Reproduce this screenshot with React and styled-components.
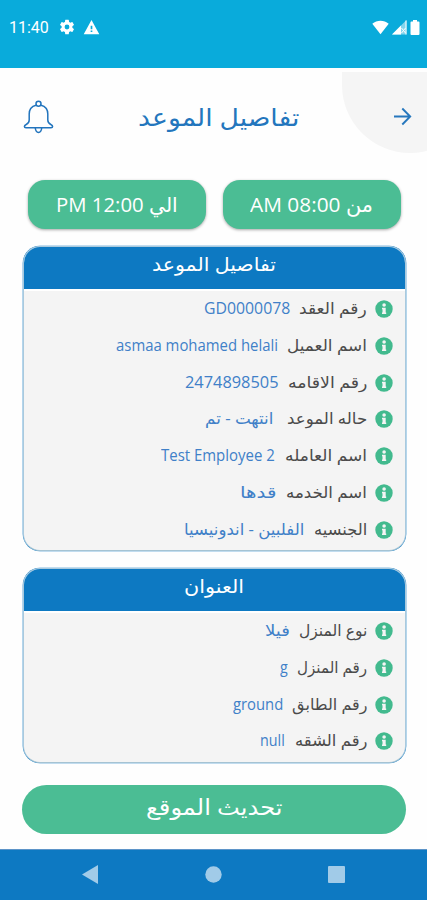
import React, { useLayoutEffect, useRef, useState } from "react";
import styled, { createGlobalStyle } from "styled-components";

const colors = {
  sky: "#09abdb",
  blue: "#0d79c2",
  link: "#4080c8",
  green: "#4bbd94",
  ink: "#4b4b4b",
  panel: "#f4f4f4",
};

const GlobalStyle = createGlobalStyle`
  *, *::before, *::after { box-sizing: border-box; }
  body {
    margin: 0;
    background: #fff;
    font-family: "Open Sans", "DejaVu Sans", sans-serif;
  }
`;

const Screen = styled.div`
  display: flex;
  flex-direction: column;
  width: 427px;
  height: 900px;
  overflow: hidden;
  background: #fefefe;
`;

const StatusBar = styled.div`
  display: flex;
  justify-content: space-between;
  flex: none;
  height: 67.5px;
  padding: 17px 7px 0 9px;
  background: ${colors.sky};
  color: #fff;
`;

const StatusGroup = styled.div`
  display: flex;
  align-items: center;
  height: 20px;
  gap: ${(p) => p.$gap}px;
`;

const Clock = styled.span`
  width: 39px;
  font: 400 16px/20px Roboto, sans-serif;
  margin-right: 3px;
  padding-top: 1px;
  white-space: nowrap;
`;

const Header = styled.header`
  position: relative;
  display: flex;
  align-items: center;
  justify-content: space-between;
  flex: none;
  height: 98.5px;
  padding: 0 15px 0 23px;
`;

const CornerCircle = styled.div`
  position: absolute;
  top: 4px;
  left: 342px;
  width: 136px;
  height: 81.5px;
  border-radius: 0 0 68px 68px;
  background: #f5f5f5;
`;

const IconButton = styled.button`
  position: relative;
  display: flex;
  padding: 0;
  border: 0;
  background: none;
`;

const Title = styled.h1`
  margin: 0 11px 0 0;
  color: #2376bd;
  font-size: 24px;
  font-weight: 400;
  line-height: 40px;
`;

const Times = styled.div`
  display: flex;
  direction: rtl;
  justify-content: space-between;
  flex: none;
  margin: 14px 26.5px 0 27.5px;
`;

const TimePill = styled.div`
  display: flex;
  justify-content: center;
  width: 178px;
  height: 49px;
  padding-top: 5px;
  border-radius: 17px;
  background: ${colors.green};
  box-shadow: 0 1px 3px rgba(0, 0, 0, 0.35);
  color: #fff;
  font-size: 20px;
  line-height: 40px;
`;

const Card = styled.section`
  direction: rtl;
  flex: none;
  height: ${(p) => p.$height}px;
  margin: 17px 21px 0 22.5px;
  border: 1px solid #a9c9dd;
  border-bottom: 1.5px solid #a5c3d3;
  border-radius: 17px;
  background: linear-gradient(#fff, #fff) top / 100% 44px no-repeat, ${colors.panel};
  overflow: hidden;
  box-shadow: 0 0 0 0.3px ${colors.blue};
`;

const CardTitle = styled.h2`
  display: flex;
  justify-content: center;
  height: 43px;
  margin: -1px -1px 1.8px;
  background: ${colors.blue};
  color: #fff;
  font-size: 19px;
  font-weight: 400;
  line-height: 37px;
`;

const Row = styled.div`
  display: flex;
  align-items: center;
  height: 36.75px;
  padding-right: 12.4px;
`;

const Label = styled.span`
  margin-right: 7.5px;
  color: ${colors.ink};
  font-size: 16px;
  line-height: 30px;
`;

const Value = styled.span`
  margin-right: ${(p) => p.$gap}px;
  color: ${colors.link};
  font-size: 16px;
  line-height: 30px;
`;

const UpdateButton = styled.button`
  display: flex;
  justify-content: center;
  flex: none;
  height: 48.5px;
  margin: 22px 21px 0 22px;
  padding: 0 11px 0 0;
  border: 0;
  border-radius: 25px;
  background: ${colors.green};
  color: #fff;
  font-family: inherit;
  font-size: 22px;
  line-height: 42px;
`;

const NavBar = styled.nav`
  display: flex;
  align-items: center;
  justify-content: space-between;
  flex: none;
  height: 51.5px;
  margin-top: auto;
  padding: 0 82px;
  border-top: 1.5px solid #5c94c8;
  background: ${colors.blue};
`;

const FitBox = styled.span`
  display: block;
  direction: ltr;
  width: ${(p) => p.$width}px;
  white-space: nowrap;
  transform: translateY(${(p) => p.$shift}px);
`;

const FitText = styled.span`
  display: inline-block;
  vertical-align: top;
  transform-origin: 0 50%;
`;

/* Condenses or expands a line of text to fill a known width. */
function Fit({ width, shift = 0, dir = "rtl", children }) {
  const ref = useRef(null);
  const [scale, setScale] = useState(1);
  useLayoutEffect(() => {
    setScale(width / ref.current.offsetWidth);
  }, [width, children]);
  return (
    <FitBox $width={width} $shift={shift}>
      <FitText ref={ref} dir={dir} style={{ transform: `scaleX(${scale})` }}>
        {children}
      </FitText>
    </FitBox>
  );
}

const GearIcon = () => (
  <svg width="18" height="18" viewBox="0 0 24 24" fill="#fff">
    <path d="M19.14 12.94c.04-.3.06-.61.06-.94 0-.32-.02-.64-.07-.94l2.03-1.58a.49.49 0 0 0 .12-.61l-1.92-3.32a.49.49 0 0 0-.59-.22l-2.39.96c-.5-.38-1.03-.7-1.62-.94l-.36-2.54a.48.48 0 0 0-.48-.41h-3.84a.47.47 0 0 0-.47.41l-.36 2.54c-.59.24-1.13.57-1.62.94l-2.39-.96a.48.48 0 0 0-.59.22L2.74 8.87a.47.47 0 0 0 .12.61l2.03 1.58c-.05.3-.09.63-.09.94s.02.64.07.94l-2.03 1.58a.49.49 0 0 0-.12.61l1.92 3.32c.12.22.37.29.59.22l2.39-.96c.5.38 1.03.7 1.62.94l.36 2.54c.05.24.24.41.48.41h3.84c.24 0 .44-.17.47-.41l.36-2.54c.59-.24 1.13-.56 1.62-.94l2.39.96c.22.08.47 0 .59-.22l1.92-3.32a.47.47 0 0 0-.12-.61zM12 15.200a3.200 3.200 0 1 1 0-6.400 3.200 3.200 0 0 1 0 6.400z" />
  </svg>
);

const WarningIcon = () => (
  <svg width="17" height="17" viewBox="0 0 24 24" fill="#fff">
    <path d="M1 21.500h22L12 1.500zm12.200-3h-2.400v-2.400h2.400zm0-4.200h-2.400V9.500h2.400z" />
  </svg>
);

const WifiIcon = () => (
  <svg width="17" height="15" viewBox="0 0 17 15" fill="#fff">
    <path d="M0.3 3.7C4.9-.3 12.1-.3 16.7 3.7L8.5 14.2z" />
  </svg>
);

const SignalIcon = () => (
  <svg width="15" height="15" viewBox="0 0 15 15">
    <path d="M0 14.5L14.5 0v14.5z" fill="#fff" fillOpacity="0.5" />
    <path d="M0 14.5L9 5.500v9z" fill="#fff" />
    <path d="M9.5 8l4 5M13.5 8l-4 5M14 .5v14" stroke="#fff" strokeWidth="1" fill="none" />
  </svg>
);

const BatteryIcon = () => (
  <svg width="10" height="15" viewBox="0 0 10 15" fill="#fff">
    <path d="M3 0h4v1.5h1.5q1 0 1 1V14q0 1-1 1h-7q-1 0-1-1V2.500q0-1 1-1H3z" />
  </svg>
);

const BellIcon = () => (
  <svg width="31" height="34" viewBox="0 0 31 34" fill="none" stroke="#2274bd" strokeWidth="1.5" strokeLinejoin="round" strokeLinecap="round">
    <circle cx="15.500" cy="3.700" r="2.500" />
    <path d="M13 5.200C8.300 6.400 6.200 9.800 6.200 14V20C6.200 22.700 5.200 23.600 3.200 24.500C.6 25.700 1 27.700 3 27.700H28C30 27.700 30.400 25.700 27.800 24.500C25.800 23.600 24.800 22.700 24.800 20V14C24.800 9.800 22.700 6.400 18 5.200" />
    <path d="M12.300 28C12.600 30.900 13.700 32.400 15.500 32.400S18.400 30.900 18.700 28" />
  </svg>
);

const ArrowIcon = () => (
  <svg width="19" height="19" viewBox="0 0 19 19" fill="none" stroke="#2677bd" strokeWidth="1.9">
    <path d="M1 9.500H17M9.300 1.500L17.200 9.500L9.300 17.500" />
  </svg>
);

const InfoIcon = () => (
  <svg width="18" height="18" viewBox="0 0 18 18">
    <circle cx="9" cy="9" r="8.7" fill="#42ba8e" />
    <circle cx="9.100" cy="5" r="1.800" fill="#f4f4f4" />
    <path d="M7 7.700h3.700v4.800h.5v1.500H7v-1.500h.5V9.200H7z" fill="#f4f4f4" />
  </svg>
);

const BackIcon = () => (
  <svg width="17" height="19" viewBox="0 0 17 19" fill="#a1cbe8"><path d="M0 9.500L16 0v19z" /></svg>
);
const HomeIcon = () => (
  <svg width="17" height="17" viewBox="0 0 17 17" fill="#a1cbe8"><circle cx="8.500" cy="8.500" r="8.200" /></svg>
);
const RecentsIcon = () => (
  <svg width="17" height="17" viewBox="0 0 17 17" fill="#a1cbe8"><rect width="17" height="17" rx="1" /></svg>
);

const appointment = [
  { label: "رقم العقد", lw: 68, value: "GD0000078", vw: 86, gap: 9, ltr: true },
  { label: "اسم العميل", lw: 80, value: "asmaa mohamed helali", vw: 162, gap: 9.5, ltr: true },
  { label: "رقم الاقامه", lw: 79, value: "2474898505", vw: 93, gap: 10.5, ltr: true },
  { label: "حاله الموعد", lw: 80, value: "انتهت - تم", vw: 68, gap: 14 },
  { label: "اسم العامله", lw: 82, value: "Test Employee 2", vw: 114, gap: 10, ltr: true },
  { label: "اسم الخدمه", lw: 81, value: "قدها", vw: 36, gap: 10 },
  { label: "الجنسيه", lw: 53, value: "الفلبين - اندونيسيا", vw: 120, gap: 10 },
];

const address = [
  { label: "نوع المنزل", lw: 68, value: "فيلا", vw: 25, gap: 9.5 },
  { label: "رقم المنزل", lw: 70, value: "g", vw: 8, gap: 9.5, ltr: true },
  { label: "رقم الطابق", lw: 75, value: "ground", vw: 50, gap: 9, ltr: true },
  { label: "رقم الشقه", lw: 72, value: "null", vw: 25, gap: 10, ltr: true },
];

function InfoCard({ title, titleWidth, height, rows }) {
  return (
    <Card $height={height}>
      <CardTitle>
        <Fit width={titleWidth}>{title}</Fit>
      </CardTitle>
      {rows.map((r) => (
        <Row key={r.label}>
          <InfoIcon />
          <Label>
            <Fit width={r.lw} shift={-1}>{r.label}</Fit>
          </Label>
          <Value $gap={r.gap}>
            <Fit width={r.vw} shift={-1} dir={r.ltr ? "ltr" : "rtl"}>{r.value}</Fit>
          </Value>
        </Row>
      ))}
    </Card>
  );
}

export default function App() {
  return (
    <>
      <GlobalStyle />
      <Screen>
        <StatusBar>
          <StatusGroup $gap={7}>
            <Clock>11:40</Clock>
            <GearIcon />
            <WarningIcon />
          </StatusGroup>
          <StatusGroup $gap={3}>
            <WifiIcon />
            <SignalIcon />
            <BatteryIcon />
          </StatusGroup>
        </StatusBar>
        <Header>
          <CornerCircle />
          <IconButton aria-label="الإشعارات"><BellIcon /></IconButton>
          <Title><Fit width={161}>تفاصيل الموعد</Fit></Title>
          <IconButton aria-label="رجوع"><ArrowIcon /></IconButton>
        </Header>
        <Times>
          <TimePill><Fit width={123}>من 08:00 AM</Fit></TimePill>
          <TimePill><Fit width={122}>الي 12:00 PM</Fit></TimePill>
        </Times>
        <InfoCard title="تفاصيل الموعد" titleWidth={124} height={305} rows={appointment} />
        <InfoCard title="العنوان" titleWidth={60} height={195} rows={address} />
        <UpdateButton><Fit width={136}>تحديث الموقع</Fit></UpdateButton>
        <NavBar>
          <BackIcon />
          <HomeIcon />
          <RecentsIcon />
        </NavBar>
      </Screen>
    </>
  );
}
